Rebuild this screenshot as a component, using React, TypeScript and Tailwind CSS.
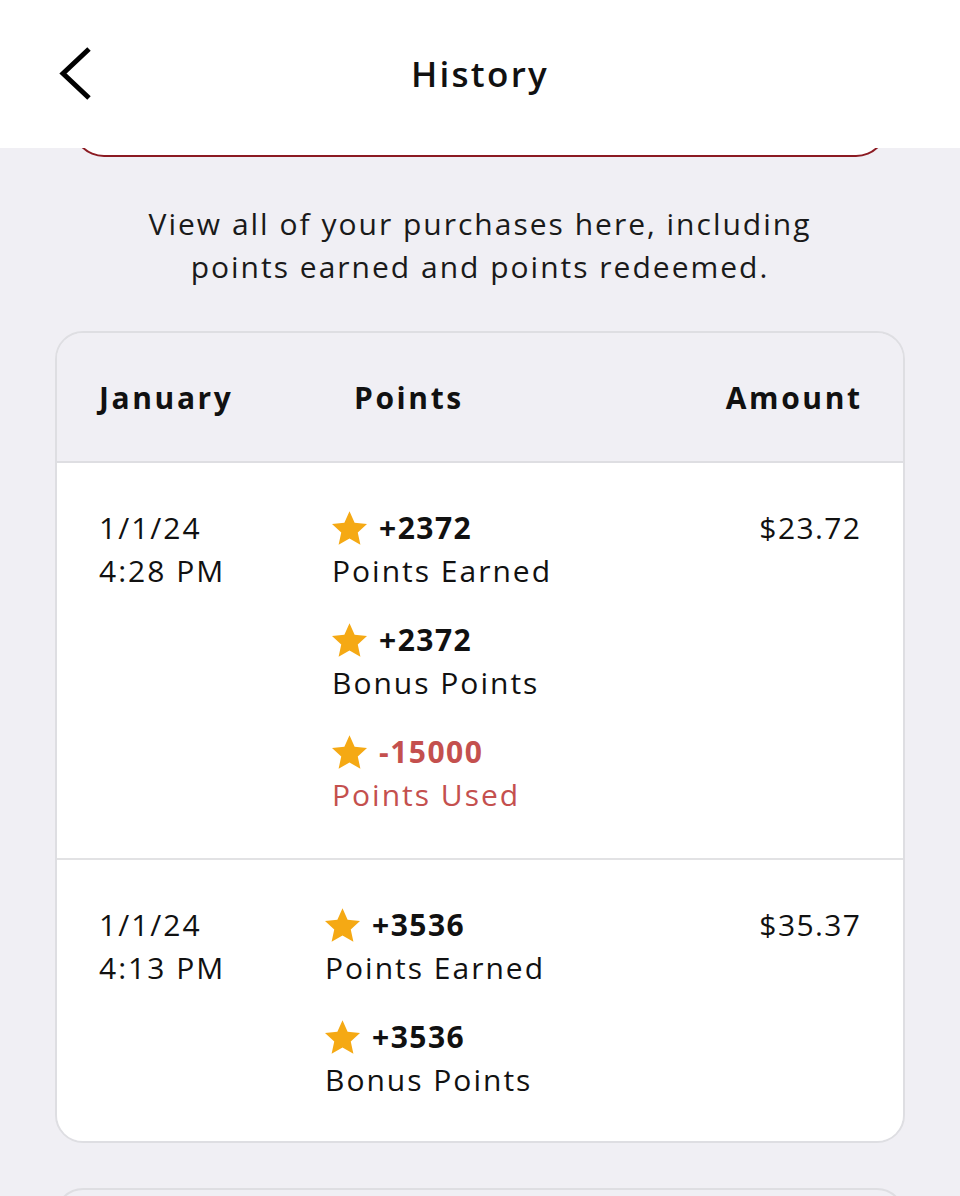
import React from "react";

const Star = () => (
  <svg width="35" height="34" viewBox="1.4 1.6 21.2 20.2" className="shrink-0">
    <path
      d="M12 1.6l3.1 6.9 7.5.8-5.6 5.1 1.6 7.4L12 18l-6.6 3.8L7 14.4 1.4 9.3l7.5-.8L12 1.6z"
      fill="#f5a914"
    />
  </svg>
);

type Entry = { value: string; label: string; red?: boolean };

const PointsItem = ({ value, label, red }: Entry) => (
  <div className="flex flex-col">
    <div className="flex items-center gap-[12px] h-[43px]">
      <Star />
      <span className={`font-bold tracking-[1.5px] ${red ? "text-[#c4504e]" : "text-[#111]"}`}>{value}</span>
    </div>
    <div className={`h-[43px] leading-[43px] ${red ? "text-[#c4504e]" : "text-[#111]"}`}>{label}</div>
  </div>
);

const Row = ({
  date,
  time,
  amount,
  items,
  pointsPad,
  last,
}: {
  date: string;
  time: string;
  amount: string;
  items: Entry[];
  pointsPad: string;
  last?: boolean;
}) => (
  <div className={`flex bg-white pl-[42px] pr-[43px] pt-[43px] ${last ? "pb-[40px]" : "pb-[42px] border-b-2 border-[#e2e2e4]"}`}>
    <div className="w-[233px] shrink-0 flex flex-col leading-[43px] text-[#111]">
      <span>{date}</span>
      <span>{time}</span>
    </div>
    <div className={`flex-1 flex flex-col gap-[26px] ${pointsPad}`}>
      {items.map((it, i) => (
        <PointsItem key={i} {...it} />
      ))}
    </div>
    <div className="leading-[43px] text-[#111] text-right tracking-[1.4px] -mr-[1.4px]">{amount}</div>
  </div>
);

export default function App() {
  return (
    <div
      className="w-[960px] h-[1196px] overflow-hidden bg-[#f0eff4] text-[30px] tracking-[2px]"
      style={{ fontFamily: '"Open Sans", "Liberation Sans", sans-serif' }}
    >
      <header className="h-[148px] bg-white flex items-center">
        <div className="w-[160px] pl-[56px] flex items-center">
          <svg width="40" height="56" viewBox="0 0 40 56">
            <path d="M33 3 L7 27.5 L33 52" fill="none" stroke="#000" strokeWidth="5" />
          </svg>
        </div>
        <div className="flex-1 text-center text-[35px] font-semibold tracking-[2.3px] text-[#111]">History</div>
        <div className="w-[160px]" />
      </header>

      <div className="mx-[72px] h-[9px] overflow-hidden flex flex-col justify-end">
        <div className="h-[40px] shrink-0 bg-white border-2 border-t-0 border-[#8b1a22] rounded-b-[32px]" />
      </div>

      <p className="mt-[45px] text-center leading-[43px] text-[#1a1a1a]">
        View all of your purchases here, including
        <br />
        points earned and points redeemed.
      </p>

      <div className="mt-[43px] mx-[55px] border-2 border-[#dedee2] rounded-[28px] overflow-hidden">
        <div className="h-[130px] flex items-center pl-[42px] pr-[43px] bg-[#f0eff4] border-b-2 border-[#dedee2] font-bold tracking-[2.6px] text-[#111]">
          <div className="w-[255px] shrink-0">January</div>
          <div className="flex-1">Points</div>
          <div className="-mr-[2.6px]">Amount</div>
        </div>
        <Row
          date="1/1/24"
          time="4:28 PM"
          amount="$23.72"
          pointsPad="pl-0"
          items={[
            { value: "+2372", label: "Points Earned" },
            { value: "+2372", label: "Bonus Points" },
            { value: "-15000", label: "Points Used", red: true },
          ]}
        />
        <Row
          date="1/1/24"
          time="4:13 PM"
          amount="$35.37"
          pointsPad="-ml-[7px]"
          last
          items={[
            { value: "+3536", label: "Points Earned" },
            { value: "+3536", label: "Bonus Points" },
          ]}
        />
      </div>

      <div className="mt-[45px] mx-[55px] h-[60px] bg-[#f0eff4] border-2 border-[#dedee2] rounded-t-[28px]" />
    </div>
  );
}
